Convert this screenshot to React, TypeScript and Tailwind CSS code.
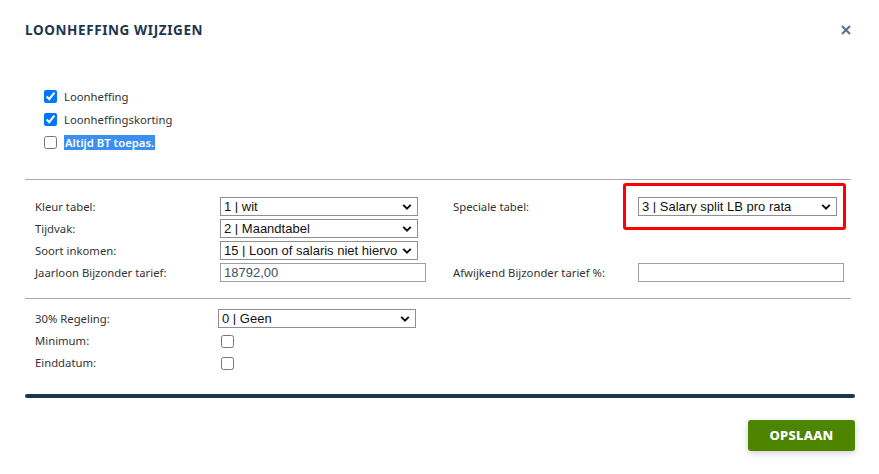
import React from "react";

const labelCls = "text-[11.3px] text-[#333] leading-none whitespace-nowrap";
const ui = { fontFamily: '"Noto Sans", "Open Sans", sans-serif' };
const ctl = { fontFamily: '"Liberation Sans", Arial, sans-serif' };

function Chevron() {
  return (
    <svg width="10" height="7" viewBox="0 0 10 7" className="pointer-events-none absolute right-[6px] top-1/2 -translate-y-1/2">
      <path d="M1.2 1.4 L5 5.2 L8.8 1.4" fill="none" stroke="#111" strokeWidth="2" />
    </svg>
  );
}

function Sel({ value, w }: { value: string; w: string }) {
  return (
    <div className={`relative h-[19px] ${w}`}>
      <select
        defaultValue={value}
        style={ctl}
        className="block h-[19px] w-full appearance-none border border-[#8f8f8f] bg-white pl-[3px] pr-[16px] text-[13px] leading-none text-[#111] outline-none"
      >
        <option>{value}</option>
      </select>
      <Chevron />
    </div>
  );
}

function Inp({ value }: { value?: string }) {
  return (
    <input
      defaultValue={value}
      style={ctl}
      className="block h-[19px] w-[206px] border border-[#a0a0a0] bg-white px-[3px] text-[13px] leading-none text-[#3b5166] outline-none"
    />
  );
}

function Box({ checked }: { checked?: boolean }) {
  return (
    <input
      type="checkbox"
      defaultChecked={checked}
      className="m-0 block h-[13px] w-[13px] accent-[#0075ff]"
    />
  );
}

export default function App() {
  return (
    <div style={ui} className="relative h-[474px] w-[879px] overflow-hidden bg-white">
      {/* header */}
      <div className="flex items-center justify-between pl-[25px] pr-[28px] pt-[20px]">
        <h1 className="text-[13.5px] font-bold leading-[20px] tracking-[0.045em] text-[#1e3550]">
          LOONHEFFING WIJZIGEN
        </h1>
        <svg width="10" height="10" viewBox="0 0 10 10">
          <path d="M1 1 L9 9 M9 1 L1 9" stroke="#5b7592" strokeWidth="2.2" />
        </svg>
      </div>

      {/* checkboxes */}
      <div className="mt-[45px] flex flex-col pl-[44px]">
        <div className="flex h-[23px] items-center gap-[7px]">
          <Box checked />
          <span className={labelCls}>Loonheffing</span>
        </div>
        <div className="flex h-[23px] items-center gap-[7px]">
          <Box checked />
          <span className={labelCls}>Loonheffingskorting</span>
        </div>
        <div className="flex h-[23px] items-center gap-[7px]">
          <Box />
          <span className="bg-[#3b8ff0] px-px py-[2px] text-[11.3px] font-semibold leading-none text-white">
            Altijd BT toepas.
          </span>
        </div>
      </div>

      <div className="ml-[25px] mt-[25px] w-[826px] border-t border-[#a9a9a9]" />

      {/* section 1 */}
      <div className="mt-[17px] grid grid-cols-[185px_233px_185px_206px] gap-y-[3px] pl-[35px]">
        <div className="flex h-[19px] items-center"><span className={labelCls}>Kleur tabel:</span></div>
        <div className="flex h-[19px] items-center"><Sel value="1 | wit" w="w-[198px]" /></div>
        <div className="flex h-[19px] items-center"><span className={labelCls}>Speciale tabel:</span></div>
        <div className="relative flex h-[19px] items-center">
          <Sel value="3 | Salary split LB pro rata" w="w-[199px]" />
          <div className="pointer-events-none absolute left-[-15px] top-[-14px] h-[47px] w-[223px] rounded-[3px] border-[3.5px] border-[#ff0000]" />
        </div>

        <div className="flex h-[19px] items-center"><span className={labelCls}>Tijdvak:</span></div>
        <div className="flex h-[19px] items-center"><Sel value="2 | Maandtabel" w="w-[198px]" /></div>
        <div />
        <div />

        <div className="flex h-[19px] items-center"><span className={labelCls}>Soort inkomen:</span></div>
        <div className="flex h-[19px] items-center"><Sel value="15 | Loon of salaris niet hiervo" w="w-[198px]" /></div>
        <div />
        <div />

        <div className="flex h-[19px] items-center"><span className={labelCls}>Jaarloon Bijzonder tarief:</span></div>
        <div className="flex h-[19px] items-center"><Inp value="18792,00" /></div>
        <div className="flex h-[19px] items-center"><span className={labelCls}>Afwijkend Bijzonder tarief %:</span></div>
        <div className="flex h-[19px] items-center"><Inp /></div>
      </div>

      <div className="ml-[25px] mt-[16px] w-[826px] border-t border-[#a9a9a9]" />

      {/* section 2 */}
      <div className="mt-[10px] grid grid-cols-[183px_200px] pl-[35px]">
        <div className="flex h-[19px] items-center"><span className={labelCls}>30% Regeling:</span></div>
        <div className="flex h-[19px] items-center"><Sel value="0 | Geen" w="w-[198px]" /></div>
        <div className="flex h-[22px] items-center pt-[4px]"><span className={labelCls}>Minimum:</span></div>
        <div className="flex h-[22px] items-center pl-[3px] pt-[4px]"><Box /></div>
        <div className="flex h-[22px] items-center pt-[4px]"><span className={labelCls}>Einddatum:</span></div>
        <div className="flex h-[22px] items-center pl-[3px] pt-[4px]"><Box /></div>
      </div>

      <div className="ml-[25px] mt-[22px] h-[4px] w-[830px] rounded-full bg-[#1c3650]" />

      <div className="flex justify-end pr-[24px] pt-[22px]">
        <button className="h-[31px] w-[107px] rounded-[3px] bg-[#4d8400] text-[13px] font-extrabold tracking-[0.02em] text-white shadow-[0_2px_6px_rgba(0,0,0,0.2)]">
          OPSLAAN
        </button>
      </div>
    </div>
  );
}
